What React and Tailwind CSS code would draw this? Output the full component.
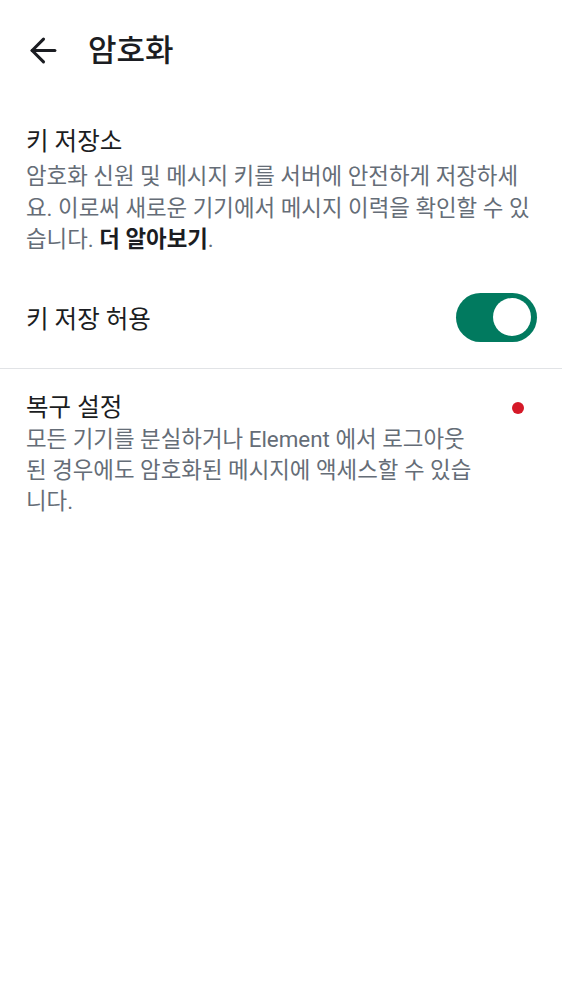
const font = { fontFamily: '"Roboto", "Noto Sans CJK KR", sans-serif' };

function BackArrow() {
  return (
    <svg width="39" height="39" viewBox="0 0 24 24" fill="none" stroke="#1b1d22" strokeWidth="1.9" strokeLinecap="round" strokeLinejoin="round">
      <path d="M19 12H5" />
      <path d="m12 19-7-7 7-7" />
    </svg>
  );
}

function Toggle({ on }) {
  return (
    <button
      className={`flex items-center w-[81px] h-[49px] rounded-full px-[6px] ${on ? "bg-[#017a5f] justify-end" : "bg-gray-300 justify-start"}`}
    >
      <span className="block w-[38px] h-[38px] rounded-full bg-white" />
    </button>
  );
}

export default function App() {
  return (
    <div className="min-h-[1000px] w-full bg-white text-[#1b1d22]" style={font}>
      {/* Header */}
      <div className="flex items-center h-[100px] pl-[24px]">
        <BackArrow />
        <h1 className="ml-[25px] text-[31px] leading-none font-medium">암호화</h1>
      </div>

      {/* Key storage */}
      <div className="px-[26px] pt-[27px]">
        <div className="text-[24.5px] leading-[30px]">키 저장소</div>
        <p className="mt-[4px] text-[22.4px] leading-[31.5px] text-[#656d77]">
          암호화 신원 및 메시지 키를 서버에 안전하게 저장하세요. 이로써 새로운 기기에서 메시지 이력을 확인할 수 있습니다.{" "}
          <span className="font-bold text-[#1b1d22]">더 알아보기</span>.
        </p>
      </div>

      <div className="flex items-center justify-between pl-[26px] pr-[25px] mt-[37px] h-[49px]">
        <span className="pt-[6px] text-[24.5px] leading-[30px]">키 저장 허용</span>
        <Toggle on />
      </div>

      <div className="mt-[26px] h-px bg-[#e1e3e6]" />

      {/* Recovery */}
      <div className="flex pl-[26px] pr-[38px] pt-[24px]">
        <div className="w-[452px]">
          <div className="text-[24.5px] leading-[30px]">복구 설정</div>
          <p className="mt-[1px] text-[22.4px] leading-[31px] text-[#656d77]">
            모든 기기를 분실하거나 Element 에서 로그아웃된 경우에도 암호화된 메시지에 액세스할 수 있습니다.
          </p>
        </div>
        <div className="ml-auto pt-[9px]">
          <span className="block w-[12px] h-[12px] rounded-full bg-[#d51928]" />
        </div>
      </div>
    </div>
  );
}
